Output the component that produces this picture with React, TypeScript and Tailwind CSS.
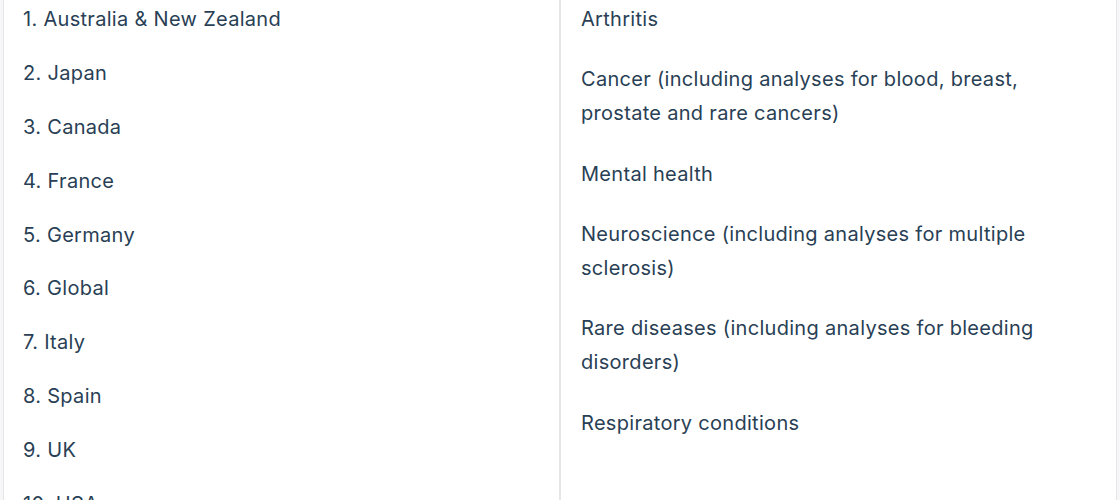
import React from "react";

const countries = [
  "Australia & New Zealand",
  "Japan",
  "Canada",
  "France",
  "Germany",
  "Global",
  "Italy",
  "Spain",
  "UK",
  "USA",
];

const areas = [
  "Arthritis",
  "Cancer (including analyses for blood, breast, prostate and rare cancers)",
  "Mental health",
  "Neuroscience (including analyses for multiple sclerosis)",
  "Rare diseases (including analyses for bleeding disorders)",
  "Respiratory conditions",
];

export default function App() {
  return (
    <div
      className="h-[500px] w-[1120px] overflow-hidden bg-[#f7f7f9] pl-[3px] pr-[3px] text-[20px] leading-[34.2px] tracking-[0.3px] text-[#293f55]"
      style={{ fontFamily: "Inter, 'Noto Sans', sans-serif" }}
    >
      <div className="grid h-full grid-cols-[557px_557px]">
        <div className="border-x border-[#e6e6e6] bg-white pl-[19px] pr-5 pt-[2px]">
          <ol className="flex flex-col gap-[19.7px]">
            {countries.map((c, i) => (
              <li key={c}>
                {i + 1}. {c}
              </li>
            ))}
          </ol>
        </div>
        <div className="border-x border-[#e6e6e6] bg-white pl-5 pr-5 pt-[2px]">
          <div className="flex max-w-[470px] flex-col gap-[26px]">
            {areas.map((a) => (
              <p key={a}>{a}</p>
            ))}
          </div>
        </div>
      </div>
    </div>
  );
}
